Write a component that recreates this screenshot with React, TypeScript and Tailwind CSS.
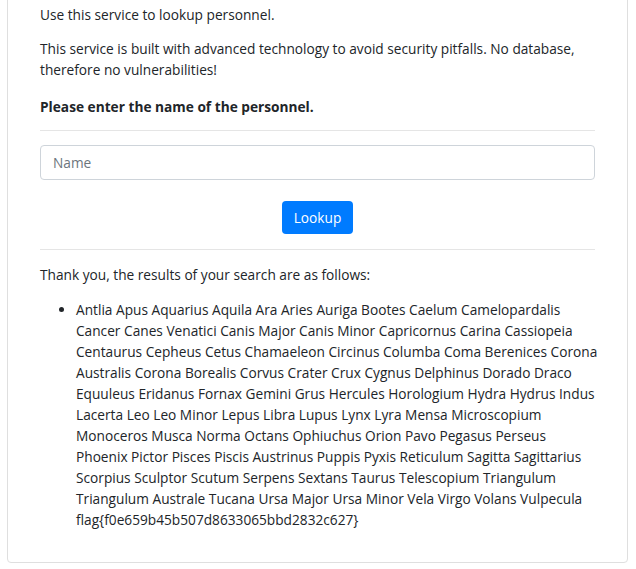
import React from 'react';

const lines = [
  'Antlia Apus Aquarius Aquila Ara Aries Auriga Bootes Caelum Camelopardalis',
  'Cancer Canes Venatici Canis Major Canis Minor Capricornus Carina Cassiopeia',
  'Centaurus Cepheus Cetus Chamaeleon Circinus Columba Coma Berenices Corona',
  'Australis Corona Borealis Corvus Crater Crux Cygnus Delphinus Dorado Draco',
  'Equuleus Eridanus Fornax Gemini Grus Hercules Horologium Hydra Hydrus Indus',
  'Lacerta Leo Leo Minor Lepus Libra Lupus Lynx Lyra Mensa Microscopium',
  'Monoceros Musca Norma Octans Ophiuchus Orion Pavo Pegasus Perseus',
  'Phoenix Pictor Pisces Piscis Austrinus Puppis Pyxis Reticulum Sagitta Sagittarius',
  'Scorpius Sculptor Scutum Serpens Sextans Taurus Telescopium Triangulum',
  'Triangulum Australe Tucana Ursa Major Ursa Minor Vela Virgo Volans Vulpecula',
  'flag{f0e659b45b507d8633065bbd2832c627}',
];

export default function App() {
  return (
    <div className="min-h-screen bg-white text-[13.7px] leading-[21px] text-[#212529] overflow-hidden" style={{ fontFamily: '"Open Sans", "Noto Sans", sans-serif' }}>
      <div className="mx-[7px] w-[621px] -mt-[20px] border border-[#dfdfdf] rounded-[4px] px-[32px] pt-[23px] pb-[32px]">
        <p className="mb-[13px]">Use this service to lookup personnel.</p>
        <p className="mb-[16px]">
          This service is built with advanced technology to avoid security pitfalls. No database, therefore no vulnerabilities!
        </p>
        <p className="font-bold">Please enter the name of the personnel.</p>
        <hr className="mt-[13px] mb-[14px] border-0 border-t border-[#e5e5e5]" />
        <input
          type="text"
          placeholder="Name"
          className="block w-full h-[35px] px-[12px] border border-[#ced4da] rounded-[4px] placeholder-[#6c757d] outline-none"
        />
        <div className="flex justify-center mt-[21px]">
          <button className="h-[33px] px-[12px] rounded-[4px] bg-[#007bff] text-white">Lookup</button>
        </div>
        <hr className="mt-[15px] mb-[14px] border-0 border-t border-[#e5e5e5]" />
        <p className="mb-[14px]">Thank you, the results of your search are as follows:</p>
        <ul className="list-disc pl-[36px]">
          <li>
            {lines.map((l, i) => (
              <span key={i} className="block whitespace-nowrap">{l}</span>
            ))}
          </li>
        </ul>
      </div>
    </div>
  );
}
